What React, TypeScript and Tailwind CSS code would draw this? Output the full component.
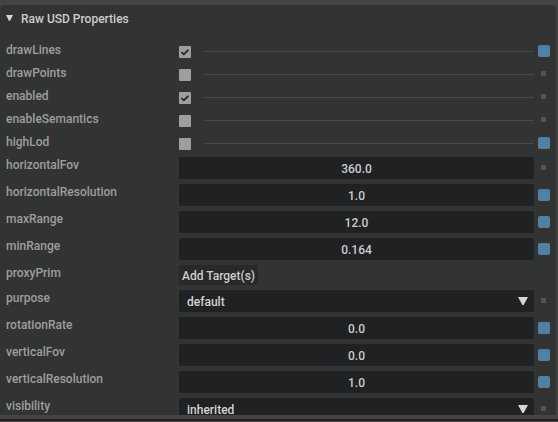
import React, { useState } from 'react';

type Kind = 'check' | 'number' | 'target' | 'select';

interface Property {
  name: string;
  kind: Kind;
  value?: string;
  checked?: boolean;
  options?: string[];
  changed?: boolean;
}

const properties: Property[] = [
  { name: 'drawLines', kind: 'check', checked: true, changed: true },
  { name: 'drawPoints', kind: 'check' },
  { name: 'enabled', kind: 'check', checked: true },
  { name: 'enableSemantics', kind: 'check' },
  { name: 'highLod', kind: 'check', changed: true },
  { name: 'horizontalFov', kind: 'number', value: '360.0' },
  { name: 'horizontalResolution', kind: 'number', value: '1.0', changed: true },
  { name: 'maxRange', kind: 'number', value: '12.0', changed: true },
  { name: 'minRange', kind: 'number', value: '0.164', changed: true },
  { name: 'proxyPrim', kind: 'target' },
  { name: 'purpose', kind: 'select', value: 'default', options: ['default', 'render', 'proxy', 'guide'] },
  { name: 'rotationRate', kind: 'number', value: '0.0', changed: true },
  { name: 'verticalFov', kind: 'number', value: '0.0', changed: true },
  { name: 'verticalResolution', kind: 'number', value: '1.0', changed: true },
  { name: 'visibility', kind: 'select', value: 'inherited', options: ['inherited', 'invisible'] },
];

const rowHeight: Record<Kind, string> = {
  check: 'h-[18px]',
  number: 'h-[22px]',
  target: 'h-5',
  select: 'h-[22px]',
};

function StateMark({ changed }: { changed?: boolean }) {
  return (
    <span className="flex size-3 shrink-0 items-center justify-center self-center">
      <span className={changed ? 'size-3 rounded-xs bg-[#5180a3]' : 'mr-px mb-px size-[5px] bg-[#525352]'} />
    </span>
  );
}

function CheckField({ id, initial }: { id: string; initial: boolean }) {
  const [on, setOn] = useState(initial);
  return (
    <div className="flex flex-1 items-center gap-[13px]">
      <span className="mt-0.5 grid size-3">
        <input
          id={id}
          type="checkbox"
          checked={on}
          onChange={() => setOn(!on)}
          className="col-start-1 row-start-1 size-3 appearance-none rounded-[1px] bg-[#9e9e9e]"
        />
        {on && (
          <svg viewBox="0 0 12 12" className="pointer-events-none col-start-1 row-start-1 size-3" fill="none">
            <path d="M2.4 6.2 L4.8 8.4 L9.4 3.8" stroke="#232425" strokeWidth="1.7" />
          </svg>
        )}
      </span>
      <span className="h-px flex-1 bg-[#484948]" />
    </div>
  );
}

function SelectField({ id, value, options }: { id: string; value: string; options: string[] }) {
  return (
    <div className="grid flex-1 items-center">
      <select
        id={id}
        defaultValue={value}
        className="col-start-1 row-start-1 h-[22px] w-full appearance-none rounded-xs bg-[#1f2123] px-2 pt-0.5 text-xs leading-5 text-[#d4d4d4]"
      >
        {options.map((o) => (
          <option key={o}>{o}</option>
        ))}
      </select>
      <svg
        viewBox="0 0 10 8"
        className="pointer-events-none col-start-1 row-start-1 mr-1.5 h-2 w-2.5 justify-self-end"
        fill="#d6d6d6"
      >
        <path d="M0 0 H10 L5.6 8 H4.4 Z" />
      </svg>
    </div>
  );
}

function PropertyRow({ p }: { p: Property }) {
  return (
    <div className={`flex shrink-0 gap-1 ${rowHeight[p.kind]}`}>
      <label htmlFor={p.name} className="w-[169px] shrink-0 text-xs leading-4 text-[#9e9e9e]">
        {p.name}
      </label>
      {p.kind === 'check' && <CheckField id={p.name} initial={!!p.checked} />}
      {p.kind === 'number' && (
        <input
          id={p.name}
          type="text"
          inputMode="decimal"
          defaultValue={p.value}
          className="min-w-0 flex-1 rounded-xs bg-[#1f2123] pt-0.5 text-center text-xs leading-5 text-[#cccccc]"
        />
      )}
      {p.kind === 'select' && <SelectField id={p.name} value={p.value ?? ''} options={p.options ?? []} />}
      {p.kind === 'target' && (
        <div className="flex flex-1">
          <button id={p.name} type="button" className="rounded-xs bg-[#292929] px-[3px] pt-0.5 text-xs leading-[18px] text-[#cccccc]">
            Add Target(s)
          </button>
        </div>
      )}
      {p.kind !== 'target' && <StateMark changed={p.changed} />}
    </div>
  );
}

export default function App() {
  const [open, setOpen] = useState(true);
  return (
    <div className="flex h-screen flex-col bg-[#444444] pt-[5px] font-['Roboto',sans-serif] font-medium">
      <section className="mr-0.5 min-h-0 flex-1 overflow-hidden rounded-t bg-[#323433] px-1.5">
        <h2>
          <button
            type="button"
            aria-expanded={open}
            onClick={() => setOpen(!open)}
            className="flex h-[37px] w-full items-start gap-2 pt-[5px] text-left text-xs leading-[18px] text-[#cccccc]"
          >
            <svg viewBox="0 0 7 6" className="mt-[5px] h-1.5 w-[7px]" fill="#d6d6d6">
              <path d="M0 0 H7 L3.9 6 H3.1 Z" />
            </svg>
            Raw USD Properties
          </button>
        </h2>
        {open && (
          <div className="flex flex-col gap-[5px]">
            {properties.map((p) => (
              <PropertyRow key={p.name} p={p} />
            ))}
          </div>
        )}
      </section>
      <footer className="mt-1 h-[3px] shrink-0 border-b border-[#4a4442] bg-[#231f1f]" />
    </div>
  );
}
